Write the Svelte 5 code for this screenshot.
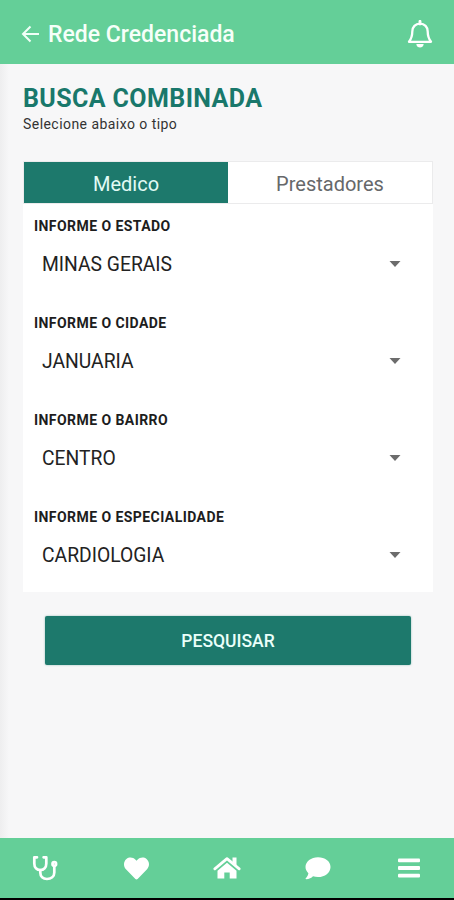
<script>
  let activeTab = 'Medico';

  const tabs = ['Medico', 'Prestadores'];

  const fields = [
    { label: 'INFORME O ESTADO', value: 'MINAS GERAIS' },
    { label: 'INFORME O CIDADE', value: 'JANUARIA' },
    { label: 'INFORME O BAIRRO', value: 'CENTRO' },
    { label: 'INFORME O ESPECIALIDADE', value: 'CARDIOLOGIA' },
  ];
</script>

<div class="app">
  <header>
    <button class="back" aria-label="Voltar">
      <svg width="19" height="18" viewBox="0 0 19 18">
        <path d="M9.5 1.5 2 9l7.5 7.5M2.3 9H18" fill="none" stroke="#f0fff7" stroke-width="2" />
      </svg>
    </button>
    <h1>Rede Credenciada</h1>
    <button class="bell" aria-label="Notificações">
      <svg width="26" height="29" viewBox="0 0 26 29">
        <path
          d="M13 3.6C8.4 3.6 5.3 7 5.3 11.5C5.3 17 4.3 18.8 2 21.8H24C21.7 18.8 20.7 17 20.7 11.5C20.7 7 17.6 3.6 13 3.6Z"
          fill="none" stroke="#fff" stroke-width="2.3" stroke-linejoin="round" />
        <path d="M13 1.2V4" stroke="#fff" stroke-width="2.8" stroke-linecap="round" />
        <path d="M9.3 24H16.7C16.4 28.7 9.6 28.7 9.3 24Z" fill="#fff" />
      </svg>
    </button>
  </header>

  <main>
    <h2>BUSCA COMBINADA</h2>
    <p class="subtitle">Selecione abaixo o tipo</p>

    <div class="tabs">
      {#each tabs as tab}
        <button class:active={activeTab === tab} on:click={() => (activeTab = tab)}>{tab}</button>
      {/each}
    </div>

    <div class="card">
      {#each fields as field}
        <div class="field">
          <div class="label">{field.label}</div>
          <div class="select">
            <span>{field.value}</span>
            <svg width="12" height="6" viewBox="0 0 12 6"><path d="M.5 0h11L6 6z" fill="#6c6c6c" /></svg>
          </div>
        </div>
      {/each}
    </div>

    <button class="search">PESQUISAR</button>
  </main>

  <nav>
    <button aria-label="Consultas">
      <svg width="26" height="26" viewBox="0 0 26 26" fill="none" stroke="#fff" stroke-width="2.7" stroke-linecap="round" stroke-linejoin="round">
        <path d="M5 2.3H2.3V8.5C2.3 12.5 4.8 15 8.3 15S14.3 12.5 14.3 8.5V2.3H11.6" />
        <path d="M8.3 15V17.5C8.3 21.5 11 24 15 24S22.3 21.5 22.3 17.5V11" />
        <circle cx="22.3" cy="9" r="1.8" />
      </svg>
    </button>
    <button aria-label="Favoritos">
      <svg width="25" height="25" viewBox="0 0 512 512">
        <path
          d="M462.3 62.6C407.5 15.9 326 24.3 275.7 76.2L256 96.5l-19.7-20.3C186.1 24.3 104.5 15.9 49.7 62.6c-62.8 53.6-66.1 149.8-9.9 207.9l193.5 199.8c12.5 12.9 32.8 12.9 45.3 0l193.5-199.8c56.3-58.1 53-154.3-9.8-207.9z"
          fill="#fff" />
      </svg>
    </button>
    <button aria-label="Início">
      <svg width="28" height="24" viewBox="0 0 28 24">
        <path d="M1.8 12.9 14 2.6 26.2 12.9" fill="none" stroke="#fff" stroke-width="2.7" stroke-linecap="round" stroke-linejoin="round" />
        <path d="M19.5 1.5h4v8.7l-4-3.4z" fill="#fff" />
        <path d="M14 6.8 23.5 14.7V22.5H16.7V16.5H11.3V22.5H4.5V14.7Z" fill="#fff" />
      </svg>
    </button>
    <button aria-label="Mensagens">
      <svg width="26" height="24" viewBox="0 0 26 24">
        <path d="M13 1.3C6.1 1.3.5 5.6.5 11c0 2.4 1.1 4.5 2.9 6.2C3 19.6 1.7 21.3.7 22.3c-.3.4-.1.9.4.9 3 0 5.4-1.3 6.9-2.9 1.6.5 3.2.8 5 .8 6.900 0 12.500-4.300 12.500-10.100S19.900 1.300 13 1.300Z" fill="#fff" />
      </svg>
    </button>
    <button aria-label="Menu">
      <svg width="24" height="22" viewBox="0 0 24 22" fill="#fff">
        <rect x="1" y="1.5" width="22" height="3.8" rx="1" />
        <rect x="1" y="9.1" width="22" height="3.8" rx="1" />
        <rect x="1" y="16.7" width="22" height="3.8" rx="1" />
      </svg>
    </button>
  </nav>
</div>

<style>
  :global(body) {
    margin: 0;
    background: #000;
  }

  .app {
    display: flex;
    flex-direction: column;
    height: 900px;
    box-sizing: border-box;
    border-bottom: 2px solid #000;
    background: linear-gradient(to right, #eeeeef, #f7f7f8 9px);
    font-family: Roboto, 'Liberation Sans', sans-serif;
  }

  button {
    display: flex;
    align-items: center;
    justify-content: center;
    padding: 0;
    border: none;
    background: none;
    font-family: inherit;
    cursor: pointer;
  }

  header {
    display: flex;
    align-items: center;
    height: 64px;
    padding: 4px 21px 0 21px;
    box-sizing: border-box;
    background: #64cf98;
  }

  .back {
    padding-bottom: 1px;
  }

  h1 {
    flex: 1;
    margin: 0 0 0 8px;
    padding-top: 2px;
    color: #f6fff9;
    font-size: 23px;
    font-weight: 500;
    line-height: 28px;
  }

  .bell {
    width: 26px;
  }

  main {
    flex: 1;
    padding: 21px 21px 0 23px;
  }

  h2 {
    margin: 0;
    color: #19786b;
    font-size: 25px;
    font-weight: 700;
    line-height: 28px;
    letter-spacing: 0.4px;
  }

  .subtitle {
    margin: 2px 0 0;
    color: #333;
    font-size: 14px;
    line-height: 18px;
    letter-spacing: 0.45px;
  }

  .tabs {
    display: flex;
    height: 43px;
    margin-top: 28px;
    box-sizing: border-box;
    border: 1px solid #ebebec;
    background: #fff;
  }

  .tabs button {
    flex: 1;
    padding-top: 2px;
    color: #66686a;
    font-size: 20px;
  }

  .tabs .active {
    background: #1d796c;
    color: #e2fbf5;
  }

  .card {
    height: 388px;
    padding: 13px 32px 0 11px;
    box-sizing: border-box;
    background: #fff;
  }

  .field {
    height: 97px;
  }

  .label {
    color: #1d1d1d;
    font-size: 14px;
    font-weight: 700;
    line-height: 18px;
    letter-spacing: 0.44px;
  }

  .select {
    display: flex;
    align-items: center;
    justify-content: space-between;
    height: 24px;
    margin-top: 17px;
    padding-left: 8px;
    color: #222;
    font-size: 19.3px;
    line-height: 24px;
  }

  .select span {
    padding-top: 2px;
  }

  .search {
    width: 366px;
    height: 49px;
    margin: 24px 0 0 22px;
    padding-top: 1px;
    border-radius: 2px;
    background: #1d796c;
    box-shadow: 0 0 2px #1d796c80;
    color: #eafffa;
    font-size: 17.5px;
    font-weight: 500;
  }

  nav {
    display: flex;
    height: 60px;
    background: #64cf98;
  }

  nav button {
    flex: 1;
  }
</style>
